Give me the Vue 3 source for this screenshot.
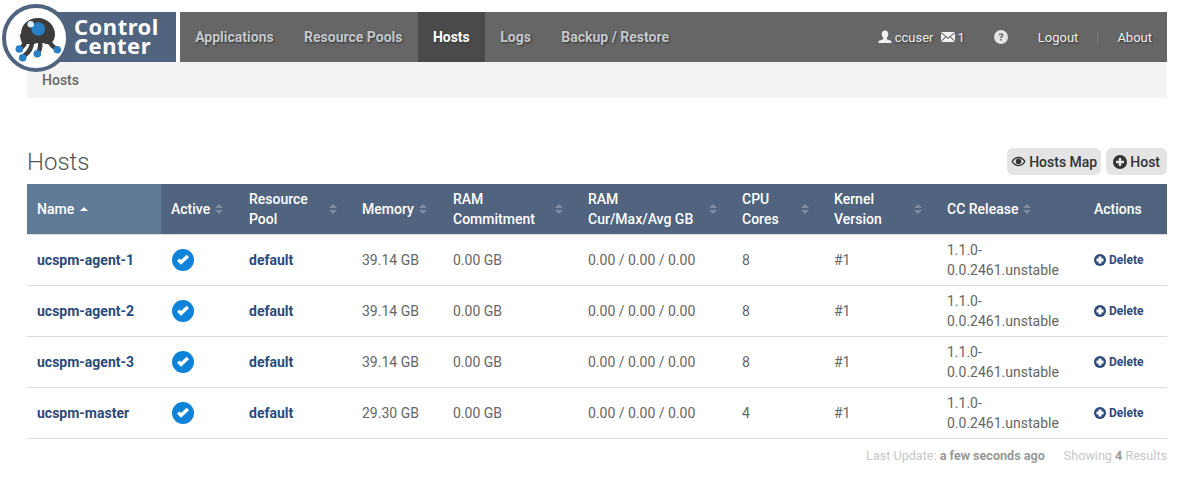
<template>
  <div class="page">
    <header class="topbar">
      <div class="brand">
        <svg class="logo" viewBox="0 0 72 72" aria-hidden="true">
          <circle cx="36" cy="35" r="32" fill="#fff" stroke="#50637f" stroke-width="4" />
          <path d="M21 31C21 21 29 15 38 15c10 0 17 8 17 16 0 5-2 8-5 10l-4 0-3-1-6 0-3 1-6 0-5 0c-2-2-3-6-3-10z" fill="#3c3c3c" />
          <g fill="none" stroke="#3c3c3c" stroke-width="4.5">
            <path d="M26 37q-1 5-6 9" />
            <path d="M32 39q0 8-8 14" />
            <path d="M40 39q1 6-2 11" />
            <path d="M49 38q2 5 8 8" />
          </g>
          <circle cx="38.300" cy="26" r="6.800" fill="#2a80c5" />
          <circle cx="30.700" cy="21.300" r="3.200" fill="#d9ecf8" />
          <circle cx="19.300" cy="46" r="3.800" fill="#2a80c5" />
          <circle cx="22.700" cy="54.700" r="3.800" fill="#2a80c5" />
          <circle cx="37.300" cy="50.700" r="3.800" fill="#2a80c5" />
          <circle cx="57.300" cy="46.700" r="3.800" fill="#2a80c5" />
        </svg>
        <div class="brand-text">Control<br />Center</div>
      </div>
      <nav class="nav">
        <a v-for="item in navItems" :key="item" class="nav-link" :class="{ active: item === 'Hosts' }">{{ item }}</a>
        <div class="nav-right">
          <span class="nav-user">
            <svg class="ic-user" viewBox="0 0 14 14" aria-hidden="true">
              <path d="M7 .5c2.100 0 3.300 1.600 3.300 3.600 0 1.500-.6 3-1.500 3.800v1c0 .5 3.900 1.200 4.400 2.200.2.5.3 1.200.3 1.900H.5c0-.7.1-1.400.3-1.900.5-1 4.400-1.700 4.400-2.200v-1C4.300 7.100 3.700 5.600 3.700 4.100 3.700 2.100 4.900.5 7 .5z" fill="#f2f2f2" />
            </svg>
            ccuser
          </span>
          <span class="nav-msg">
            <svg class="ic-mail" viewBox="0 0 14 10" aria-hidden="true">
              <path d="M0 0h14L7 5.500zM0 1.300l4.200 3.300L0 9zM14 1.300L9.800 4.600 14 9zM5 5.300l2 1.600 2-1.600 4.800 4.700H.2z" fill="#f2f2f2" />
            </svg>
            1
          </span>
          <svg class="ic-help" viewBox="0 0 14 14" aria-hidden="true">
            <circle cx="7" cy="7" r="7" fill="#e4e4e4" />
            <path d="M4.700 5.200C4.900 3.900 5.800 3.200 7.100 3.200c1.400 0 2.300.8 2.300 1.900 0 1-.6 1.400-1.200 1.800-.4.300-.5.500-.5 1H6.200c0-.9.200-1.300.8-1.700.5-.4.800-.6.800-1 0-.4-.3-.7-.8-.7-.5 0-.8.300-.9.800zM6.200 9h1.500v1.500H6.200z" fill="#666" />
          </svg>
          <a class="nav-plain">Logout</a>
          <span class="nav-sep"></span>
          <a class="nav-plain">About</a>
        </div>
      </nav>
    </header>

    <div class="crumbs">Hosts</div>

    <div class="title-row">
      <h2 class="title">Hosts</h2>
      <div class="title-actions">
        <button class="pill map" type="button">
          <svg class="ic-eye" viewBox="0 0 16 11" aria-hidden="true">
            <path d="M8 .5c3.300 0 6 2 7.500 5-1.500 3-4.200 5-7.500 5s-6-2-7.500-5C2 2.500 4.700.5 8 .5zm0 1.400C5.500 1.900 3.400 3.300 2.100 5.500 3.400 7.700 5.500 9.100 8 9.100s4.600-1.400 5.900-3.600C12.600 3.300 10.500 1.900 8 1.900zm0 .6a3 3 0 1 1 0 6 3 3 0 0 1 0-6z" fill="#333" fill-rule="evenodd" />
          </svg>
          Hosts Map
        </button>
        <button class="pill add" type="button">
          <svg class="ic-plus" viewBox="0 0 14 14" aria-hidden="true">
            <circle cx="7" cy="7" r="7" fill="#333" />
            <path d="M5.800 3h2.400v2.800H11v2.400H8.200V11H5.800V8.200H3V5.800h2.800z" fill="#e4e4e4" />
          </svg>
          Host
        </button>
      </div>
    </div>

    <table class="hosts">
      <colgroup>
        <col v-for="w in colWidths" :key="w.id" :style="{ width: w.px + 'px' }" />
      </colgroup>
      <thead>
        <tr>
          <th class="sorted">
            <div class="th-in">Name<span class="caret-up"></span></div>
          </th>
          <th v-for="h in headers" :key="h.key">
            <div class="th-in">
              <span v-if="h.two">{{ h.two[0] }}<br />{{ h.two[1] }}</span>
              <span v-else>{{ h.label }}</span>
              <span v-if="h.sort" class="sort" :class="{ far: h.two }"></span>
            </div>
          </th>
        </tr>
      </thead>
      <tbody>
        <tr v-for="row in rows" :key="row.name">
          <td class="strong">{{ row.name }}</td>
          <td>
            <svg class="ic-ok" viewBox="0 0 22 22" aria-hidden="true">
              <circle cx="11" cy="11" r="11" fill="#0f83da" />
              <path d="M5 11.800 9 15.800l8-7.500-2.400-2.500L9 11l-1.600-1.600z" fill="#fff" />
            </svg>
          </td>
          <td class="strong">default</td>
          <td>{{ row.mem }}</td>
          <td>0.00 GB</td>
          <td>0.00 / 0.00 / 0.00</td>
          <td>{{ row.cores }}</td>
          <td>#1</td>
          <td class="release">1.1.0-<br />0.0.2461.unstable</td>
          <td>
            <a class="del">
              <svg class="ic-del" viewBox="0 0 12 12" aria-hidden="true">
                <circle cx="6" cy="6" r="6" fill="#2c4a7c" />
                <path d="M4.500 2.500h3V4.500h2v3h-2v2h-3v-2h-2v-3h2z" fill="#fff" />
              </svg>
              Delete
            </a>
          </td>
        </tr>
      </tbody>
    </table>

    <div class="foot">
      <span>Last Update: <b>a few seconds ago</b></span>
      <span>Showing <b>4</b> Results</span>
    </div>
  </div>
</template>

<script setup>
const navItems = ["Applications", "Resource Pools", "Hosts", "Logs", "Backup / Restore"];

const colWidths = [134, 78, 113, 91, 135, 154, 92, 113, 147, 83].map((px, id) => ({ id, px }));

const headers = [
  { key: "active", label: "Active", sort: true },
  { key: "pool", two: ["Resource", "Pool"], sort: true },
  { key: "mem", label: "Memory", sort: true },
  { key: "commit", two: ["RAM", "Commitment"], sort: true },
  { key: "cur", two: ["RAM", "Cur/Max/Avg GB"], sort: true },
  { key: "cpu", two: ["CPU", "Cores"], sort: true },
  { key: "kernel", two: ["Kernel", "Version"], sort: true },
  { key: "cc", label: "CC Release", sort: true },
  { key: "actions", label: "Actions", sort: false },
];

const rows = [
  { name: "ucspm-agent-1", mem: "39.14 GB", cores: 8 },
  { name: "ucspm-agent-2", mem: "39.14 GB", cores: 8 },
  { name: "ucspm-agent-3", mem: "39.14 GB", cores: 8 },
  { name: "ucspm-master", mem: "29.30 GB", cores: 4 },
];
</script>

<style>
html, body { margin: 0; background: #fff; }
</style>

<style scoped>
.page {
  width: 1183px;
  height: 482px;
  box-sizing: border-box;
  padding: 12px 16px 0 27px;
  overflow: hidden;
  font-family: Roboto, "Liberation Sans", sans-serif;
  font-size: 14px;
  color: #666;
}

/* top bar */
.topbar {
  display: flex;
  height: 50px;
}
.brand {
  position: relative;
  width: 149px;
  background: #50637f;
  margin-right: 4px;
  flex: none;
}
.logo {
  position: absolute;
  left: -27px;
  top: -9px;
  width: 72px;
  height: 72px;
  z-index: 2;
}
.brand-text {
  padding: 5px 0 0 47px;
  font-family: "Noto Sans", sans-serif;
  font-weight: 700;
  font-size: 22px;
  line-height: 19px;
  letter-spacing: .5px;
  color: #fff;
}
.nav {
  flex: 1;
  display: flex;
  align-items: stretch;
  background: #666;
}
.nav-link {
  display: flex;
  align-items: center;
  padding: 0 15.2px;
  font-weight: 700;
  font-size: 14px;
  color: #c4c8cc;
  text-shadow: 1px 1px 2px #333;
}
.nav-link.active {
  background: #4a4a4a;
  color: #fff;
}
.nav-right {
  margin-left: auto;
  display: flex;
  align-items: center;
  padding-right: 15px;
  font-size: 13px;
  color: #eee;
  text-shadow: 1px 1px 2px #333;
}
.nav-user, .nav-msg {
  display: flex;
  align-items: center;
}
.ic-user { width: 14px; height: 14px; margin-right: 3px; }
.nav-msg { margin-left: 7px; }
.ic-mail { width: 14px; height: 10px; margin-right: 3px; }
.ic-help { width: 14px; height: 14px; margin: 0 30px 0 29px; }
.nav-sep {
  width: 1px;
  height: 11px;
  background: #7c7c7c;
  margin: 0 19px;
}

.crumbs {
  height: 36px;
  box-sizing: border-box;
  padding: 10px 15px 0;
  background: #f3f3f3;
  font-weight: 500;
  font-size: 14px;
  line-height: 16px;
  color: #666;
}

.title-row {
  display: flex;
  justify-content: space-between;
  align-items: flex-end;
  margin-top: 50px;
  height: 28px;
  margin-bottom: 8px;
}
.title {
  margin: 0;
  font-weight: 300;
  font-size: 24px;
  line-height: 28px;
  color: #555;
}
.title-actions { display: flex; gap: 5px; margin-bottom: 1px; }
.pill {
  display: flex;
  align-items: center;
  height: 27px;
  border: 0;
  border-radius: 6px;
  background: #e4e4e4;
  font-family: inherit;
  font-weight: 500;
  font-size: 14px;
  color: #333;
}
.pill.map { padding: 0 4px; }
.pill.add { padding: 0 7px; }
.ic-eye { width: 15px; height: 11px; margin-right: 3px; }
.ic-plus { width: 14px; height: 14px; margin-right: 3px; }

/* table */
.hosts {
  width: 1140px;
  table-layout: fixed;
  border-collapse: collapse;
}
.hosts th {
  height: 50px;
  padding: 0 0 0 10px;
  border-bottom: 1px solid #ddd;
  background: #50637f;
  color: #fff;
  font-weight: 500;
  font-size: 14px;
  line-height: 20px;
  text-align: left;
}
.hosts th.sorted { background: #607b97; }
.th-in {
  display: flex;
  align-items: center;
  padding-right: 15px;
}
.caret-up {
  width: 0;
  height: 0;
  margin-left: 6px;
  border: 4px solid transparent;
  border-top: 0;
  border-bottom: 4px solid #fff;
}
.sort {
  position: relative;
  flex: none;
  width: 8px;
  height: 10px;
  margin-left: 5px;
}
.sort.far { margin-left: auto; }
.sort::before, .sort::after {
  content: "";
  position: absolute;
  left: 0;
  border: 4px solid transparent;
}
.sort::before { top: 0; border-top: 0; border-bottom: 4px solid #7d8ca3; }
.sort::after { bottom: 0; border-bottom: 0; border-top: 4px solid #7d8ca3; }

.hosts td {
  height: 50px;
  padding: 0 0 0 10px;
  border-bottom: 1px solid #ddd;
  font-size: 14px;
  line-height: 20px;
  color: #666;
}
.hosts td.strong {
  font-weight: 700;
  color: #2c4a7c;
}
.ic-ok {
  display: block;
  width: 22px;
  height: 22px;
  margin-left: 1px;
}
.del {
  display: flex;
  align-items: center;
  font-weight: 700;
  font-size: 12px;
  color: #2c4a7c;
}
.ic-del { width: 12px; height: 12px; margin-right: 3px; }

.foot {
  display: flex;
  justify-content: flex-end;
  gap: 19px;
  margin-top: 9px;
  font-size: 12.6px;
  line-height: 16px;
  color: #c8c8c8;
}
.foot b { font-weight: 700; color: #999; }
</style>
